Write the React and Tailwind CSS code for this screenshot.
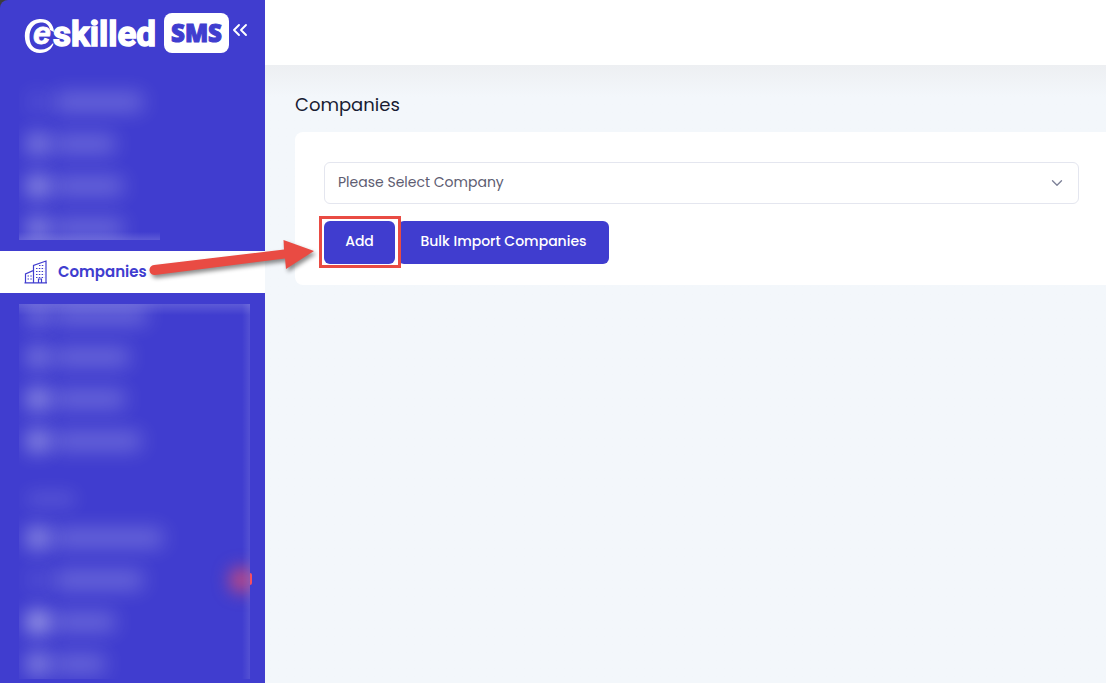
import { ChevronDown, ChevronsLeft } from "lucide-react";

const upperItems = [
  { icon: "bg-white/10", text: "w-[88px]" },
  { icon: "bg-white/40", text: "w-[60px]" },
  { icon: "bg-white/50", text: "w-[68px]" },
  { icon: "bg-white/45", text: "w-[68px]" },
];

const middleItems = [
  { icon: "bg-white/30", text: "w-[92px]" },
  { icon: "bg-white/35", text: "w-[74px]" },
  { icon: "bg-white/50", text: "w-[70px]" },
  { icon: "bg-white/50", text: "w-[86px]" },
];

const lowerItems = [
  { icon: "bg-white/50", text: "w-[108px]" },
  { icon: "bg-white/10", text: "w-[88px]", badge: true },
  { icon: "bg-white/65", text: "w-[60px]" },
  { icon: "bg-white/45", text: "w-[50px]" },
];

function HiddenItems({ items }) {
  return items.map((item, index) => (
    <li key={index} className="flex h-[42px] items-center gap-1.5">
      <span className={`size-[22px] rounded-full blur-[10px] ${item.icon}`} />
      <span className={`h-[18px] rounded bg-white/23 blur-[10px] ${item.text}`} />
      {item.badge && (
        <span className="-mr-1 ml-auto size-6 rounded-full bg-[#f64e60]/80 blur-[9px]" />
      )}
    </li>
  ));
}

function Logo() {
  return (
    <a href="#home" aria-label="eskilled SMS" className="flex items-center">
      <svg viewBox="0 0 206 42" className="h-[42px] w-[206px]" fill="white">
        <path d="M28.500 31.500C25 36 20.500 38 15.500 37.500C8.500 36.800 5.500 31.500 5.500 25C5.500 17 9.500 11 16.500 10.500C22 10.300 25 13 26 18L30 20C29.500 11 23.500 6.500 15.500 7C6.500 7.500 0.800 14.500 0.800 24C0.800 34 7 41 16 41C23 41 28 37 29.500 31.500Z" />
        <text x="9" y="32" fontSize="32" fontWeight="700" fontStyle="italic" stroke="white" strokeWidth="0.8" fontFamily="'Liberation Sans', sans-serif">e</text>
        <text x="29" y="34" fontSize="35" fontWeight="700" stroke="white" strokeWidth="1.4" fontFamily="'Roboto', sans-serif">skilled</text>
        <rect x="140" y="1" width="65" height="40" rx="8" />
        <text x="172.5" y="30" textAnchor="middle" fontSize="24" fontWeight="800" fill="#403dcf" stroke="#403dcf" strokeWidth="1" fontFamily="'Open Sans', sans-serif">SMS</text>
      </svg>
    </a>
  );
}

function BuildingsIcon() {
  return (
    <svg viewBox="0 0 24 24" className="size-6" fill="none" stroke="#403dcf" strokeWidth="1.2">
      <path d="M1.500 22.500V14L9.500 10.500V22.500M9.500 22.500V5.500L22 1V22.500M0.500 22.900H23M14.500 22.500V19H17.500V22.500" />
      <path strokeDasharray="1.500 1.300" d="M12 8.500H20.500M12 11.500H20.500M12 14.500H20.500M12 17.500H20.500M15 5.500H20.500M3.500 16H8M3.500 19H8" />
    </svg>
  );
}

function PointerArrow() {
  return (
    <svg
      aria-hidden="true"
      viewBox="0 0 172 44"
      className="pointer-events-none absolute -top-4 left-[147px] z-20 h-11 w-[172px] drop-shadow-[2px_3px_2px_rgba(0,0,0,0.45)]"
      fill="#e94b43"
    >
      <path d="M7 30L137 14.500L136.500 5L167 16L139 34L138 23.500L8 40A5 5 0 0 1 7 30Z" />
    </svg>
  );
}

export default function App() {
  return (
    <div className="flex min-h-screen bg-[#3c3c3c] font-['Poppins','Inter',sans-serif]">
      <aside className="relative z-10 flex w-[265px] shrink-0 flex-col rounded-tl-lg bg-[#403dcf]">
        <div className="flex h-[75px] items-start gap-1 pt-3 pl-6">
          <Logo />
          <button type="button" aria-label="Collapse menu" className="mt-1.5 -ml-1.5 text-white">
            <ChevronsLeft className="size-6" strokeWidth={1.9} />
          </button>
        </div>
        <nav aria-label="Main">
          <ul className="ml-[19px] h-[165px] w-[141px] overflow-hidden bg-linear-to-b from-transparent from-95% to-white/15 pt-1.5 pl-2">
            <HiddenItems items={upperItems} />
          </ul>
          <div className="relative my-[11px]">
            <a
              href="#companies"
              aria-current="page"
              className="flex h-[42px] items-center gap-2.5 bg-white pl-6 text-[15px] font-semibold text-[#403dcf]"
            >
              <BuildingsIcon />
              Companies
            </a>
            <PointerArrow />
          </div>
          <div className="relative mr-[15px] ml-[19px]">
            <ul className="h-[375px] overflow-hidden bg-linear-to-b from-white/15 to-transparent to-3% pl-2">
              <li className="-mt-2.5">
                <ul>
                  <HiddenItems items={middleItems} />
                </ul>
              </li>
              <li className="flex h-[55px] items-end pb-3">
                <span className="h-3 w-12 rounded bg-white/15 blur-[9px]" />
              </li>
              <HiddenItems items={lowerItems} />
            </ul>
            <span className="absolute inset-y-0 right-0 w-2 bg-linear-to-l from-white/10 to-transparent" />
            <span className="absolute top-[269px] -right-0.5 h-3 w-0.5 rounded-r-full bg-[#f64e60]" />
          </div>
        </nav>
      </aside>

      <div className="flex min-w-0 flex-1 flex-col">
        <header className="h-[65px] bg-white" />
        <main className="flex-1 bg-linear-to-b from-[#edeff2] to-[#f3f7fb] to-[32px] pt-[26px] pl-[30px]">
          <h1 className="text-lg leading-7 text-[#181c32]">Companies</h1>
          <section className="mt-[13px] rounded-l-lg bg-white pt-[30px] pr-[27px] pb-[21px] pl-[29px]">
            <div className="relative">
              <select
                aria-label="Company"
                className="h-[42px] w-full appearance-none rounded-md border border-[#e4e6ef] bg-white px-[13px] pb-0.5 text-[14px] text-[#5e5d72]"
              >
                <option>Please Select Company</option>
              </select>
              <ChevronDown
                className="pointer-events-none absolute top-3 right-[13px] size-[18px] text-[#7e8299]"
                strokeWidth={1.8}
              />
            </div>
            <div className="mt-[17px] flex gap-[3px]">
              <div className="relative h-[43px]">
                <button
                  type="button"
                  className="h-[43px] w-[71px] rounded-md bg-[#403dcf] pb-0.5 text-[14px] font-medium text-white"
                >
                  Add
                </button>
                <span className="pointer-events-none absolute -inset-[5px] -right-1.5 -bottom-1 border-3 border-[#e94b43]" />
              </div>
              <button
                type="button"
                className="h-[43px] w-[211px] rounded-md bg-[#403dcf] pb-0.5 text-[14px] font-medium text-white"
              >
                Bulk Import Companies
              </button>
            </div>
          </section>
        </main>
      </div>
    </div>
  );
}
